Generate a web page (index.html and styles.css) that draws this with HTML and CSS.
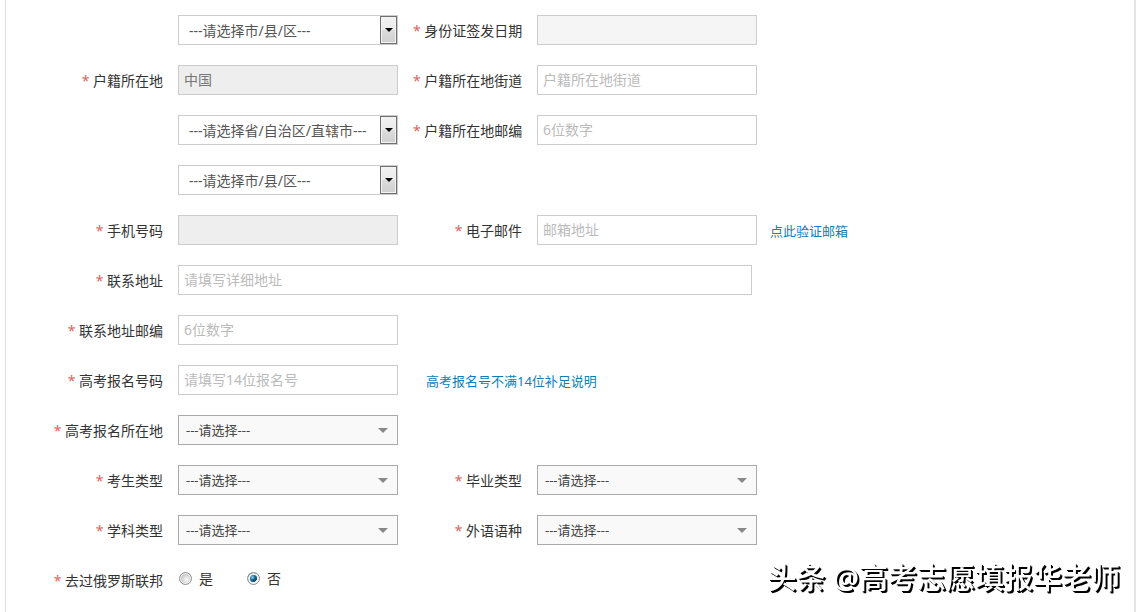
FILE: index.html
```html
<!DOCTYPE html>
<html lang="zh-CN">
<head>
    <meta charset="UTF-8">
    <meta name="viewport" content="width=device-width, initial-scale=1.0">
    <title>考生信息填写</title>
    <link rel="stylesheet" href="styles.css">
</head>
<body>
    <form class="panel">
        <div class="row">
            <span class="label"></span>
            <div class="select-old">
                <select aria-label="市/县/区"><option>---请选择市/县/区---</option></select>
            </div>
            <label class="label label-second" for="id-date"><span class="star">*</span> 身份证签发日期</label>
            <input type="text" class="field readonly" id="id-date" readonly>
        </div>
        <div class="row">
            <label class="label" for="country"><span class="star">*</span> 户籍所在地</label>
            <input type="text" class="field" id="country" value="中国" disabled>
            <label class="label label-second" for="street"><span class="star">*</span> 户籍所在地街道</label>
            <input type="text" class="field" id="street" placeholder="户籍所在地街道">
        </div>
        <div class="row">
            <span class="label"></span>
            <div class="select-old">
                <select aria-label="省/自治区/直辖市"><option>---请选择省/自治区/直辖市---</option></select>
            </div>
            <label class="label label-second" for="home-zip"><span class="star">*</span> 户籍所在地邮编</label>
            <input type="text" class="field" id="home-zip" placeholder="6位数字">
        </div>
        <div class="row">
            <span class="label"></span>
            <div class="select-old">
                <select aria-label="户籍市/县/区"><option>---请选择市/县/区---</option></select>
            </div>
        </div>
        <div class="row">
            <label class="label" for="mobile"><span class="star">*</span> 手机号码</label>
            <input type="text" class="field" id="mobile" disabled>
            <label class="label label-second" for="email"><span class="star">*</span> 电子邮件</label>
            <input type="text" class="field" id="email" placeholder="邮箱地址">
            <a class="link" href="#">点此验证邮箱</a>
        </div>
        <div class="row">
            <label class="label" for="address"><span class="star">*</span> 联系地址</label>
            <input type="text" class="field field-long" id="address" placeholder="请填写详细地址">
        </div>
        <div class="row">
            <label class="label" for="address-zip"><span class="star">*</span> 联系地址邮编</label>
            <input type="text" class="field" id="address-zip" placeholder="6位数字">
        </div>
        <div class="row">
            <label class="label" for="exam-no"><span class="star">*</span> 高考报名号码</label>
            <input type="text" class="field" id="exam-no" placeholder="请填写14位报名号">
            <a class="link link-help" href="#">高考报名号不满14位补足说明</a>
        </div>
        <div class="row">
            <label class="label" for="exam-place"><span class="star">*</span> 高考报名所在地</label>
            <div class="select-flat">
                <select id="exam-place"><option>---请选择---</option></select>
            </div>
        </div>
        <div class="row">
            <label class="label" for="student-type"><span class="star">*</span> 考生类型</label>
            <div class="select-flat">
                <select id="student-type"><option>---请选择---</option></select>
            </div>
            <label class="label label-second" for="graduate-type"><span class="star">*</span> 毕业类型</label>
            <div class="select-flat">
                <select id="graduate-type"><option>---请选择---</option></select>
            </div>
        </div>
        <div class="row">
            <label class="label" for="subject-type"><span class="star">*</span> 学科类型</label>
            <div class="select-flat">
                <select id="subject-type"><option>---请选择---</option></select>
            </div>
            <label class="label label-second" for="language"><span class="star">*</span> 外语语种</label>
            <div class="select-flat">
                <select id="language"><option>---请选择---</option></select>
            </div>
        </div>
        <div class="row">
            <span class="label" id="russia-label"><span class="star">*</span> 去过俄罗斯联邦</span>
            <div class="radios" role="radiogroup" aria-labelledby="russia-label">
                <label class="radio"><input type="radio" name="russia" value="1">是</label>
                <label class="radio"><input type="radio" name="russia" value="0" checked>否</label>
            </div>
        </div>
    </form>
    <div class="watermark">头条 @高考志愿填报华老师</div>
</body>
</html>
```

FILE: styles.css
```css
*,
*::before,
*::after {
    box-sizing: border-box;
}
body {
    margin: 0;
    padding: 0 4px 0 5px;
    background-color: #fff;
    font-family: "Noto Sans", "Noto Sans CJK SC", sans-serif;
    font-size: 14px;
    color: #333;
}
.panel {
    display: flex;
    flex-direction: column;
    gap: 20px;
    min-height: 100vh;
    padding-top: 15px;
    border-left: 1px solid #ddd;
    border-right: 2px solid #e4e4e4;
}
.row {
    display: flex;
    gap: 15px;
    height: 30px;
}
.label {
    flex: none;
    width: 157px;
    line-height: 32px;
    text-align: right;
    white-space: nowrap;
}
.label-second {
    width: 109px;
}
.star {
    color: #d9675f;
}

/* text boxes */
.field {
    flex: none;
    width: 220px;
    height: 30px;
    padding: 0 6px 2px 5px;
    border: 1px solid #ccc;
    border-radius: 0;
    background-color: #fff;
    font-family: inherit;
    font-size: 14px;
    color: #555;
}
.field-long {
    width: 574px;
}
.field::placeholder {
    color: #bbb;
}
.field:disabled {
    background-color: #eee;
    color: #777;
}
.readonly {
    background-color: #f5f5f5;
}

/* drop-downs */
.select-old,
.select-flat {
    position: relative;
    flex: none;
    width: 220px;
    height: 30px;
}
.select-old select,
.select-flat select {
    appearance: none;
    width: 100%;
    height: 30px;
    border: 1px solid #ccc;
    border-radius: 0;
    background-color: #fff;
    font-family: inherit;
}
.select-old select {
    padding: 0 20px 0 10px;
    font-size: 14px;
    color: #555;
}
.select-flat select {
    padding: 0 20px 0 7px;
    border-color: #aaa;
    background-color: #f9f9f9;
    font-size: 13px;
    color: #444;
}
.select-old::before {
    content: "";
    position: absolute;
    top: 1px;
    right: 1px;
    width: 17px;
    height: 28px;
    border: 1px solid #707070;
    background: linear-gradient(#f2f2f2, #ebebeb 50%, #dddddd 50%, #cfcfcf);
    box-shadow: inset 0 0 0 1px #f3f3f3;
    pointer-events: none;
}
.select-old::after,
.select-flat::after {
    content: "";
    position: absolute;
    top: 13px;
    border: 4px solid transparent;
    border-bottom: 0;
    pointer-events: none;
}
.select-old::after {
    right: 5px;
    border-top-color: #000;
}
.select-flat::after {
    right: 10px;
    border-width: 5px;
    border-bottom: 0;
    border-top-color: #888;
}

.link {
    margin-left: -2px;
    font-size: 13px;
    line-height: 32px;
    color: #0c7fba;
    text-decoration: none;
    white-space: nowrap;
}
.link-help {
    padding-left: 15px;
}

/* radios */
.radios {
    display: flex;
    gap: 34px;
    padding-left: 1px;
}
.radio {
    display: flex;
    gap: 7px;
    height: 28px;
    line-height: 28px;
}
.radio input {
    appearance: none;
    width: 13px;
    height: 13px;
    margin: 7px 0 0;
    border: 1px solid #8e8f8f;
    border-radius: 50%;
    background: radial-gradient(circle at 60% 60%, #f2f2f2 10%, #c8c8c8 60%);
    box-shadow: inset 0 0 0 1px #f4f4f4;
}
.radio input:checked {
    background: radial-gradient(circle at 40% 40%, #9fd8ee, #1c6f9b 25%, #0b3550 52%, transparent 56%), #eee;
    box-shadow: inset 0 0 0 2px #f0f4f6;
}

.watermark {
    position: fixed;
    right: 20px;
    bottom: 12px;
    font-size: 29px;
    font-weight: 500;
    line-height: 44px;
    color: #fff;
    text-shadow: 1px 1px 0 #000, 2px 2px 0 #000;
    white-space: nowrap;
}
```
